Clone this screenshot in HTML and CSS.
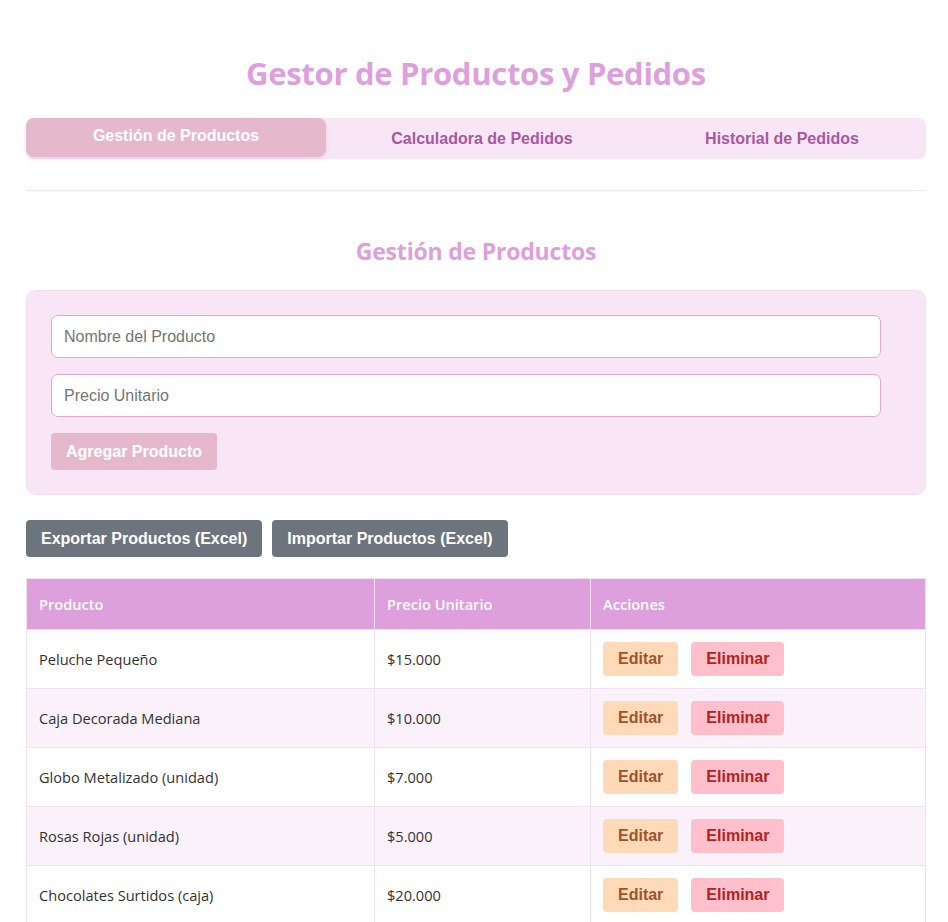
FILE: index.html
```html
<!DOCTYPE html>
<html lang="es">
<head>
<meta charset="utf-8">
<title>Gestor de Productos y Pedidos</title>
<link rel="stylesheet" href="styles.css">
</head>
<body>
<div class="container">
  <h1 class="title">Gestor de Productos y Pedidos</h1>
  <nav class="tabs">
    <button class="tab active">Gestión de Productos</button>
    <button class="tab">Calculadora de Pedidos</button>
    <button class="tab">Historial de Pedidos</button>
  </nav>
  <hr class="divider">
  <section class="section">
    <h2 class="subtitle">Gestión de Productos</h2>
    <div class="form-box">
      <input class="field" type="text" placeholder="Nombre del Producto">
      <input class="field" type="text" placeholder="Precio Unitario">
      <button class="btn-add">Agregar Producto</button>
    </div>
    <div class="excel-row">
      <button class="btn-gray">Exportar Productos (Excel)</button>
      <button class="btn-gray">Importar Productos (Excel)</button>
    </div>
    <table class="table">
      <thead>
        <tr><th class="c1">Producto</th><th class="c2">Precio Unitario</th><th>Acciones</th></tr>
      </thead>
      <tbody>
        <tr><td>Peluche Pequeño</td><td>$15.000</td><td><button class="btn-edit">Editar</button><button class="btn-del">Eliminar</button></td></tr>
        <tr><td>Caja Decorada Mediana</td><td>$10.000</td><td><button class="btn-edit">Editar</button><button class="btn-del">Eliminar</button></td></tr>
        <tr><td>Globo Metalizado (unidad)</td><td>$7.000</td><td><button class="btn-edit">Editar</button><button class="btn-del">Eliminar</button></td></tr>
        <tr><td>Rosas Rojas (unidad)</td><td>$5.000</td><td><button class="btn-edit">Editar</button><button class="btn-del">Eliminar</button></td></tr>
        <tr><td>Chocolates Surtidos (caja)</td><td>$20.000</td><td><button class="btn-edit">Editar</button><button class="btn-del">Eliminar</button></td></tr>
      </tbody>
    </table>
  </section>
</div>
</body>
</html>
```
FILE: styles.css
```css
* { box-sizing: border-box; }
html, body { margin: 0; padding: 0; background: #ffffff; overflow: hidden; }
body {
  font-family: "Open Sans", "Noto Sans", sans-serif;
  color: #333;
}
.container {
  width: 900px;
  margin-left: 26px;
  padding-top: 52px;
}
.title {
  margin: 0;
  text-align: center;
  font-size: 31px;
  line-height: 42px;
  font-weight: 700;
  color: #dda0dd;
  letter-spacing: -0.3px;
}
.tabs {
  margin-top: 24px;
  display: flex;
  background: #f8e6f7;
  border-radius: 8px;
  height: 41px;
}
.tab {
  flex: none;
  width: 300px;
  border: none;
  background: transparent;
  font-family: "Liberation Sans", Arial, sans-serif;
  font-weight: 700;
  font-size: 16px;
  color: #a8589f;
  padding: 0 0 0 12px;
  height: 41px;
  cursor: pointer;
}
.tab.active {
  background: #e6b8cc;
  color: #ffffff;
  border-radius: 8px;
  height: 39px;
  padding: 0 0 4px 0;
  box-shadow: 0 2px 4px rgba(200, 130, 180, 0.25);
}
.divider {
  margin: 31px 0 0;
  border: none;
  border-top: 1px solid #f6e2f3;
  height: 0;
}
.section { padding-top: 44px; }
.subtitle {
  margin: 0;
  text-align: center;
  font-size: 23px;
  line-height: 32px;
  font-weight: 700;
  color: #dda0dd;
  letter-spacing: -0.2px;
}
.form-box {
  margin-top: 23px;
  background: #f8e6f7;
  border: 1px solid #f3dcef;
  border-radius: 10px;
  padding: 24px 44px 24px 24px;
  display: flex;
  flex-direction: column;
  align-items: flex-start;
}
.field {
  width: 100%;
  height: 43px;
  border: 1px solid #e2a9cb;
  border-radius: 7px;
  background: #fff;
  padding: 0 12px;
  font-family: "Liberation Sans", Arial, sans-serif;
  font-size: 16px;
  color: #333;
  margin-bottom: 16px;
  outline: none;
}
.field::placeholder { color: #757575; }
.btn-add {
  height: 37px;
  padding: 0 15px;
  border: none;
  border-radius: 4px;
  background: #e6b8cc;
  color: #fff;
  font-family: "Liberation Sans", Arial, sans-serif;
  font-weight: 700;
  font-size: 16px;
}
.excel-row {
  margin-top: 25px;
  display: flex;
  gap: 10px;
}
.btn-gray {
  height: 37px;
  padding: 0 15px;
  border: none;
  border-radius: 4px;
  background: #6c757d;
  color: #fff;
  font-family: "Liberation Sans", Arial, sans-serif;
  font-weight: 700;
  font-size: 16px;
}
.table {
  margin-top: 21px;
  width: 900px;
  border-collapse: collapse;
  font-size: 14.6px;
}
.table th, .table td {
  border: 1px solid #f3e1f1;
  text-align: left;
  padding: 0 12px;
}
.table th {
  background: #dda0dd;
  color: #fff;
  font-weight: 600;
  height: 51px;
}
.table th.c1 { width: 348px; }
.table th.c2 { width: 216px; }
.table td { height: 59px; color: #333; }
.table tbody tr:nth-child(even) td { background: #faf1fa; }
.btn-edit, .btn-del {
  height: 34px;
  border: none;
  border-radius: 4px;
  font-family: "Liberation Sans", Arial, sans-serif;
  font-weight: 700;
  font-size: 16px;
  padding: 0 15px;
  vertical-align: middle;
}
.btn-edit { background: #ffdab9; color: #a0522d; margin-right: 13px; }
.btn-del { background: #ffc0cb; color: #b22222; }
```
